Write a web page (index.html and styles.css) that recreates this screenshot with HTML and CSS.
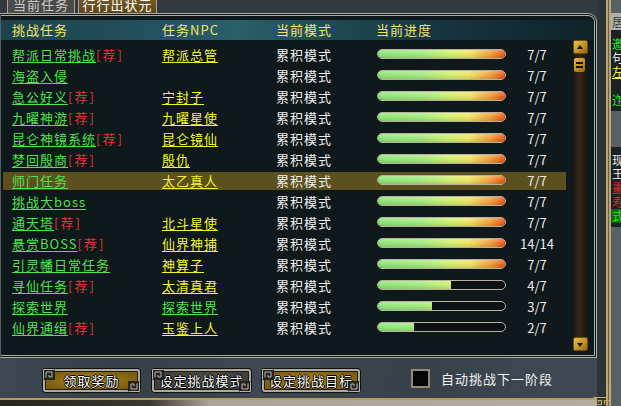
FILE: index.html
```html
<!DOCTYPE html>
<html lang="zh">
<head>
    <meta charset="UTF-8">
    <meta name="viewport" content="width=device-width, initial-scale=1.0">
    <title>行行出状元</title>
    <link rel="stylesheet" href="styles.css">
</head>
<body>

<div class="screen">
    <div class="window">
        <!-- Onglets -->
        <div class="tabs">
            <div class="tab">当前任务</div>
            <div class="tab active">行行出状元</div>
        </div>

        <!-- Liste des défis -->
        <div class="frame">
            <div class="head">
                <span>挑战任务</span>
                <span>任务NPC</span>
                <span>当前模式</span>
                <span>当前进度</span>
            </div>
            <div class="body">
                <div class="table">
                    <div class="row">
                        <span><a class="name">帮派日常挑战</a><em>[荐]</em></span>
                        <span><a class="npc">帮派总管</a></span>
                        <span class="mode">累积模式</span>
                        <span><span class="bar"><i style="width:100%"></i></span></span>
                        <span class="count">7/7</span>
                    </div>
                    <div class="row">
                        <span><a class="name">海盗入侵</a></span>
                        <span></span>
                        <span class="mode">累积模式</span>
                        <span><span class="bar"><i style="width:100%"></i></span></span>
                        <span class="count">7/7</span>
                    </div>
                    <div class="row">
                        <span><a class="name">急公好义</a><em>[荐]</em></span>
                        <span><a class="npc">宁封子</a></span>
                        <span class="mode">累积模式</span>
                        <span><span class="bar"><i style="width:100%"></i></span></span>
                        <span class="count">7/7</span>
                    </div>
                    <div class="row">
                        <span><a class="name">九曜神游</a><em>[荐]</em></span>
                        <span><a class="npc">九曜星使</a></span>
                        <span class="mode">累积模式</span>
                        <span><span class="bar"><i style="width:100%"></i></span></span>
                        <span class="count">7/7</span>
                    </div>
                    <div class="row">
                        <span><a class="name">昆仑神镜系统</a><em>[荐]</em></span>
                        <span><a class="npc">昆仑镜仙</a></span>
                        <span class="mode">累积模式</span>
                        <span><span class="bar"><i style="width:100%"></i></span></span>
                        <span class="count">7/7</span>
                    </div>
                    <div class="row">
                        <span><a class="name">梦回殷商</a><em>[荐]</em></span>
                        <span><a class="npc">殷仇</a></span>
                        <span class="mode">累积模式</span>
                        <span><span class="bar"><i style="width:100%"></i></span></span>
                        <span class="count">7/7</span>
                    </div>
                    <div class="row selected">
                        <span><a class="name">师门任务</a></span>
                        <span><a class="npc">太乙真人</a></span>
                        <span class="mode">累积模式</span>
                        <span><span class="bar"><i style="width:100%"></i></span></span>
                        <span class="count">7/7</span>
                    </div>
                    <div class="row">
                        <span><a class="name">挑战大boss</a></span>
                        <span></span>
                        <span class="mode">累积模式</span>
                        <span><span class="bar"><i style="width:100%"></i></span></span>
                        <span class="count">7/7</span>
                    </div>
                    <div class="row">
                        <span><a class="name">通天塔</a><em>[荐]</em></span>
                        <span><a class="npc">北斗星使</a></span>
                        <span class="mode">累积模式</span>
                        <span><span class="bar"><i style="width:100%"></i></span></span>
                        <span class="count">7/7</span>
                    </div>
                    <div class="row">
                        <span><a class="name">悬赏BOSS</a><em>[荐]</em></span>
                        <span><a class="npc">仙界神捕</a></span>
                        <span class="mode">累积模式</span>
                        <span><span class="bar"><i style="width:100%"></i></span></span>
                        <span class="count">14/14</span>
                    </div>
                    <div class="row">
                        <span><a class="name">引灵幡日常任务</a></span>
                        <span><a class="npc">神算子</a></span>
                        <span class="mode">累积模式</span>
                        <span><span class="bar"><i style="width:100%"></i></span></span>
                        <span class="count">7/7</span>
                    </div>
                    <div class="row">
                        <span><a class="name">寻仙任务</a><em>[荐]</em></span>
                        <span><a class="npc">太清真君</a></span>
                        <span class="mode">累积模式</span>
                        <span><span class="bar"><i style="width:57.1%"></i></span></span>
                        <span class="count">4/7</span>
                    </div>
                    <div class="row">
                        <span><a class="name">探索世界</a></span>
                        <span><a class="name">探索世界</a></span>
                        <span class="mode">累积模式</span>
                        <span><span class="bar"><i style="width:42.9%"></i></span></span>
                        <span class="count">3/7</span>
                    </div>
                    <div class="row">
                        <span><a class="name">仙界通缉</a><em>[荐]</em></span>
                        <span><a class="npc">玉鉴上人</a></span>
                        <span class="mode">累积模式</span>
                        <span><span class="bar"><i style="width:28.6%"></i></span></span>
                        <span class="count">2/7</span>
                    </div>
                </div>

                <!-- Barre de défilement -->
                <div class="scroll">
                    <div class="arrow up"></div>
                    <div class="track"><div class="thumb"></div></div>
                    <div class="arrow down"></div>
                </div>
            </div>
        </div>

        <!-- Boutons -->
        <div class="footer">
            <div class="btn gold">领取奖励<svg class="fret tl"><use href="#fret"/></svg><svg class="fret br"><use href="#fret"/></svg></div>
            <div class="btn grey">设定挑战模式<svg class="fret tl"><use href="#fret"/></svg><svg class="fret br"><use href="#fret"/></svg></div>
            <div class="btn gold">设定挑战目标<svg class="fret tl"><use href="#fret"/></svg><svg class="fret br"><use href="#fret"/></svg></div>
            <div class="check"></div>
            <div class="check-label">自动挑战下一阶段</div>
        </div>

        <div class="bottom-line"></div>
    </div>

    <!-- Fenêtre de discussion derrière -->
    <div class="side">
        <div class="chat">
            <span class="c-box">居</span>
            <div class="chat-dark first">
                <span class="c-green">邀</span>
                <span class="c-white">句</span>
                <span class="c-yellow">左</span>
                <span class="c-green low">迮</span>
            </div>
            <div class="chat-dark second">
                <span class="c-white">现</span>
                <span class="c-white">王</span>
                <span class="c-red">畫</span>
                <span class="c-red">寿</span>
                <span class="c-green boxed">式</span>
            </div>
        </div>
    </div>

    <svg class="corner" viewBox="0 0 20 22">
        <path d="M15.5 0 V13.5 H1.5 M18.5 0 V16.5 H12.5 V20.5 M4.5 13.5 V20.5 H9.5 V16.5 H6.5 V18.5" fill="none" stroke="#c2aa66" stroke-width="1.2"/>
    </svg>
</div>

<svg class="defs">
    <defs>
        <symbol id="fret" viewBox="0 0 12 11">
            <rect width="12" height="11" fill="#262420"/>
            <path d="M0.5 10.5 V0.5 H11.5 M3 8.5 V3 H9 V8 H6 V6" fill="none" stroke="#b6b6ae" stroke-width="1"/>
        </symbol>
    </defs>
</svg>

</body>
</html>
```

FILE: styles.css
```css
body {
    margin: 0;
    width: 621px;
    height: 406px;
    overflow: hidden;
    background: #30383e;
    font-family: "Noto Sans CJK SC", "Noto Sans", sans-serif;
    font-size: 13px;
    color: #ececec;
}

.screen {
    position: relative;
    display: flex;
    height: 406px;
}

.window {
    width: 597px;
    display: flex;
    flex-direction: column;
    background: #323a40;
}

/* Onglets */
.tabs {
    height: 13px;
    display: flex;
    align-items: flex-end;
    gap: 3px;
    padding-left: 7px;
    overflow: hidden;
}

.tab {
    width: 68px;
    height: 18px;
    box-sizing: border-box;
    padding-top: 2px;
    border: 1px solid #a4a49c;
    border-bottom: none;
    border-radius: 4px 4px 0 0;
    background: #4b4b49;
    color: #cacaca;
    text-align: center;
    line-height: 14px;
    letter-spacing: 1px;
}

.tab.active {
    width: 79px;
    background: linear-gradient(#7a5e26, #5e4518);
    color: #ffffff;
}

/* Cadre de la liste */
.frame {
    height: 345px;
    box-sizing: border-box;
    border: 3px double #aeaea2;
    border-left: 1px solid #565e64;
    border-top-right-radius: 9px;
    background: #0f181a;
    display: flex;
    flex-direction: column;
}

.head {
    margin-top: 4px;
    height: 20px;
    display: grid;
    grid-template-columns: 150px 114px 100px 1fr;
    padding-left: 11px;
    line-height: 20px;
    color: #f2e46a;
    letter-spacing: 1px;
    background: linear-gradient(to right, #1c434c 0%, #235260 28%, #2a606a 40%, #1f4a52 55%, #163440 75%, #0f2228 100%);
}

.body {
    flex: 1;
    display: flex;
}

.table {
    width: 566px;
    padding-top: 4px;
}

.row {
    display: grid;
    grid-template-columns: 150px 114px 100px 131px 60px;
    padding-left: 11px;
    height: 21px;
    line-height: 21px;
    letter-spacing: 1px;
    white-space: nowrap;
}

.row.selected {
    background: linear-gradient(#5c501e, #5c501e) 2px 2px / 563px 18px no-repeat;
}

.name,
.npc {
    text-decoration: underline;
    text-underline-offset: 2px;
    text-decoration-thickness: 1px;
}

.name {
    color: #4fe24f;
}

.npc {
    color: #f6f62c;
}

.row em {
    font-style: normal;
    color: #e23434;
    letter-spacing: 2px;
}

.mode {
    color: #f0f0f0;
}

.count {
    text-align: center;
    letter-spacing: 0;
    color: #ececec;
}

/* Barre de progression */
.bar {
    display: block;
    width: 129px;
    height: 10px;
    box-sizing: border-box;
    margin: 5px 0 0 1px;
    border: 1px solid #b6b29c;
    border-radius: 5px;
    background: #0c1214;
    overflow: hidden;
}

.bar i {
    display: block;
    height: 100%;
    background:
        linear-gradient(rgba(255, 255, 255, 0.25), rgba(255, 255, 255, 0) 50%, rgba(0, 0, 0, 0.12)),
        linear-gradient(to right, #8ee47a 0%, #a6ea80 35%, #d4f070 58%, #eee464 72%, #f0a242 88%, #ea5a1c 100%);
    background-size: 100% 100%, 127px 100%;
    background-repeat: no-repeat;
}

/* Barre de défilement */
.scroll {
    width: 27px;
    box-sizing: border-box;
    padding: 0 0 4px 6px;
    display: flex;
    flex-direction: column;
}

.arrow {
    position: relative;
    width: 15px;
    height: 14px;
    box-sizing: border-box;
    border: 1px solid #6a4c0c;
    border-radius: 2px;
    background: linear-gradient(135deg, #ecc04a, #c08e22 60%, #93680e);
}

.arrow::after {
    content: '';
    position: absolute;
    left: 3px;
    border-left: 3.5px solid transparent;
    border-right: 3.5px solid transparent;
}

.arrow.up::after {
    top: 4px;
    border-bottom: 4px solid #111;
}

.arrow.down::after {
    top: 5px;
    border-top: 4px solid #111;
}

.track {
    flex: 1;
    width: 13px;
    background: linear-gradient(to right, #20170d, #35281a 50%, #20170d);
}

.thumb {
    width: 11px;
    height: 14px;
    margin: 4px 0 0 1px;
    border-radius: 2px;
    background:
        linear-gradient(#111, #111) center 4px / 7px 2px no-repeat,
        linear-gradient(#111, #111) center 8px / 7px 2px no-repeat,
        linear-gradient(135deg, #e8bc48, #b98a20 60%, #8e650e);
}

/* Boutons du bas */
.footer {
    height: 40px;
    box-sizing: border-box;
    padding: 11px 0 0 43px;
    display: flex;
    align-items: flex-start;
    background:
        radial-gradient(circle at 20% 40%, rgba(0, 0, 0, 0.12), transparent 30%),
        radial-gradient(circle at 70% 70%, rgba(0, 0, 0, 0.1), transparent 35%),
        #3d4852;
}

.btn {
    position: relative;
    width: 97px;
    height: 23px;
    box-sizing: border-box;
    border: 2px solid #aaaaa2;
    border-radius: 3px;
    box-shadow: 0 0 0 1px #121212, inset 0 0 0 1px #241c08;
    color: #ffffff;
    font-size: 13px;
    letter-spacing: 1px;
    line-height: 19px;
    text-align: center;
    text-shadow: 1px 0 #000, -1px 0 #000, 0 1px #000, 0 -1px #000;
}

.btn.gold {
    background: radial-gradient(ellipse at center, #a8841e, #7c5c10 80%);
}

.btn.grey {
    width: 99px;
    margin-left: 12px;
    background: radial-gradient(ellipse at center, #545452, #3e3e3c 80%);
}

.btn.gold + .btn.grey + .btn.gold {
    width: 98px;
    margin-left: 11px;
}

.fret {
    position: absolute;
    width: 12px;
    height: 11px;
}

.fret.tl {
    top: -2px;
    left: -2px;
}

.fret.br {
    right: -2px;
    bottom: -2px;
    transform: rotate(180deg);
}

.check {
    width: 19px;
    height: 19px;
    box-sizing: border-box;
    margin-left: 51px;
    border: 2px solid #8e8c76;
    background: #050505;
}

.check-label {
    margin-left: 11px;
    line-height: 19px;
    letter-spacing: 1px;
    color: #f2f2f2;
}

.bottom-line {
    height: 8px;
    border-top: 2px solid #b49c5c;
    box-sizing: border-box;
    background: linear-gradient(to right, #26241f 0%, #3a3630 25%, #a8a498 35%, #b2ada0 100%);
}

/* Fenêtre de discussion partiellement visible */
.side {
    width: 24px;
    box-sizing: border-box;
    padding-left: 9px;
    background: #2e353a;
}

.chat {
    height: 100%;
    box-sizing: border-box;
    border-left: 5px double #bea66a;
    padding-top: 13px;
    background: #596064;
    overflow: hidden;
    white-space: nowrap;
    font-size: 12px;
}

.chat span {
    display: block;
    height: 14px;
    padding-left: 1px;
    line-height: 14px;
    overflow: hidden;
}

.c-box {
    height: 17px !important;
    line-height: 17px !important;
    background: #aeb0ae;
    color: #333;
}

.chat-dark {
    background: #1b2124;
}

.chat-dark.first {
    padding: 7px 0 4px;
}

.chat-dark.second {
    margin-top: 36px;
    padding: 6px 0 4px;
}

.c-green {
    color: #2ae62a;
}

.c-green.low {
    margin-top: 14px;
}

.c-green.boxed {
    background: #116611;
}

.c-white {
    color: #f0f0f0;
}

.c-yellow {
    color: #f4f42c;
    text-decoration: underline;
}

.c-red {
    color: #e02a2a;
}

.corner {
    position: absolute;
    left: 592px;
    top: 384px;
    width: 20px;
    height: 22px;
}

.defs {
    position: absolute;
    width: 0;
    height: 0;
}
```
